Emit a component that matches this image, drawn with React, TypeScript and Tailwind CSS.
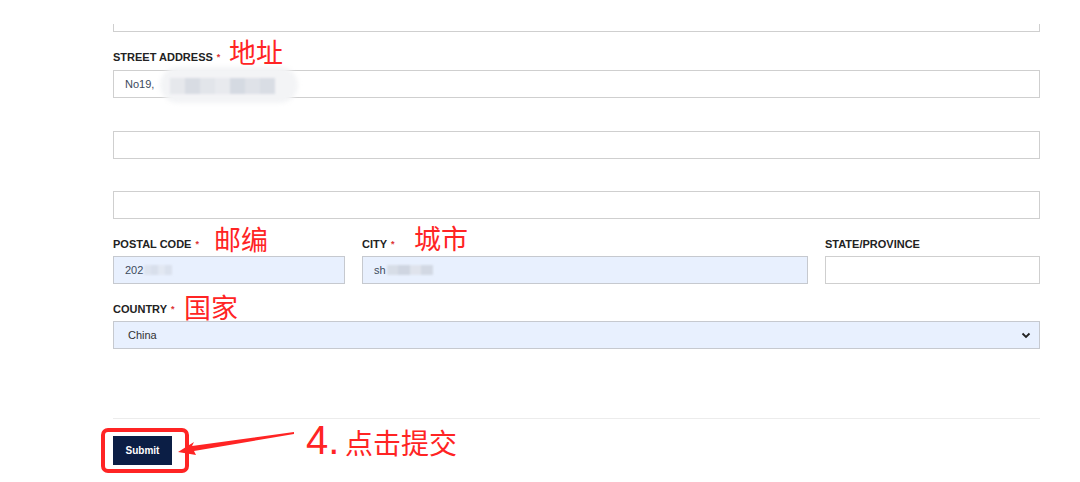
import React from "react";

const Label = ({ text, req }: { text: string; req?: boolean }) => (
  <div className="h-[14px] flex items-center text-[11px] leading-[14px] font-bold text-[#222]" style={{ fontFamily: '"Liberation Sans", Arial, sans-serif' }}>
    <span>{text}</span>
    {req && <span className="ml-[4px] text-[#d33] text-[9px] font-bold">*</span>}
  </div>
);

const Mosaic = ({ w, cls }: { w: number; cls?: string }) => (
  <span className={"inline-flex h-[10px] blur-[1px] " + (cls ?? "")} style={{ width: w }}>
    <span className="flex-1 bg-[#d4d9e2]" />
    <span className="flex-1 bg-[#c9cfda]" />
    <span className="flex-1 bg-[#dde1e8]" />
    <span className="flex-1 bg-[#cdd3dd]" />
  </span>
);

export default function App() {
  const red = "text-[#ff2424]";
  const cjk = { fontFamily: '"Noto Sans CJK SC", "Noto Sans", sans-serif' };
  const sans = { fontFamily: '"Liberation Sans", Arial, sans-serif' };
  return (
    <div className="relative w-[1080px] h-[482px] bg-white overflow-hidden" style={sans}>
      <div className="ml-[113px] w-[927px] flex flex-col">
        <div className="mt-[24px] h-[8px] border-x border-b border-[#cfcfcf]" />

        <div className="mt-[18px]"><Label text="STREET ADDRESS" req /></div>
        <div className="mt-[6px] h-[28px] border border-[#cfcfcf] flex items-center pl-[11px] text-[11px] text-[#3c4a5c]">No19,</div>
        <div className="mt-[33px] h-[28px] border border-[#cfcfcf]" />
        <div className="mt-[32px] h-[28px] border border-[#cfcfcf]" />

        <div className="mt-[18px] flex gap-[17px]">
          <div className="w-[232px] flex flex-col">
            <Label text="POSTAL CODE" req />
            <div className="mt-[5px] h-[28px] border border-[#c6c9cf] bg-[#e8f0fe] flex items-center pl-[11px] text-[11px] text-[#3c4a5c]">
              <span>202</span><Mosaic w={28} cls="ml-[1px] opacity-50" />
            </div>
          </div>
          <div className="w-[446px] flex flex-col">
            <Label text="CITY" req />
            <div className="mt-[5px] h-[28px] border border-[#c6c9cf] bg-[#e8f0fe] flex items-center pl-[11px] text-[11px] text-[#3c4a5c]">
              <span>sh</span><Mosaic w={46} cls="ml-[1px] opacity-80" />
            </div>
          </div>
          <div className="flex-1 flex flex-col">
            <Label text="STATE/PROVINCE" />
            <div className="mt-[5px] h-[28px] border border-[#cfcfcf]" />
          </div>
        </div>

        <div className="mt-[18px]"><Label text="COUNTRY" req /></div>
        <div className="mt-[5px] h-[28px] border border-[#c6c9cf] bg-[#e8f0fe] flex items-center justify-between pl-[14px] pr-[8px] text-[11px] text-[#333]">
          <span>China</span>
          <svg width="10" height="7" viewBox="0 0 10 7"><path d="M1.5 1.5 L5 5 L8.5 1.5" fill="none" stroke="#222" strokeWidth="1.8" /></svg>
        </div>

        <div className="mt-[69px] border-t border-[#ececec]" />
        <div className="mt-[17px]">
          <button className="h-[29px] w-[59px] bg-[#0b1e45] text-white text-[10px] font-semibold" style={sans}>Submit</button>
        </div>
      </div>

      {/* annotations */}
      <div className="absolute left-[160px] top-[67px] w-[138px] h-[36px] rounded-full bg-[#f3f4f6] blur-[2px]" />
      <div className="absolute left-[170px] top-[78px] blur-[1px] flex h-[16px]">
        <span className="w-[15px] bg-[#e6e8ec]" />
        <span className="w-[15px] bg-[#d8dce3]" />
        <span className="w-[15px] bg-[#e2e5ea]" />
        <span className="w-[15px] bg-[#e8eaee]" />
        <span className="w-[15px] bg-[#d5dae2]" />
        <span className="w-[15px] bg-[#dfe2e8]" />
        <span className="w-[15px] bg-[#d9dde4]" />
      </div>

      <div className={"absolute left-[229px] top-[36px] text-[27px] leading-[32px] " + red} style={cjk}>地址</div>
      <div className={"absolute left-[214px] top-[223px] text-[27px] leading-[32px] " + red} style={cjk}>邮编</div>
      <div className={"absolute left-[414px] top-[222px] text-[27px] leading-[32px] " + red} style={cjk}>城市</div>
      <div className={"absolute left-[184px] top-[291px] text-[27px] leading-[32px] " + red} style={cjk}>国家</div>

      <div className="absolute left-[101px] top-[428px] w-[88px] h-[45px] border-[4px] border-[#ff2424] rounded-[7px]" />
      <svg className="absolute left-[170px] top-[428px]" width="130" height="34" viewBox="0 0 130 34">
        <path d="M124 4 L22 18 L24 14 L8 24 L26 27 L24 23 L124 6 Z" fill="#ff2424" />
      </svg>
      <div className={"absolute left-[306px] top-[418px] text-[40px] leading-[44px] " + red} style={sans}>4.</div>
      <div className={"absolute left-[345px] top-[425px] text-[28px] leading-[34px] " + red} style={cjk}>点击提交</div>
    </div>
  );
}
